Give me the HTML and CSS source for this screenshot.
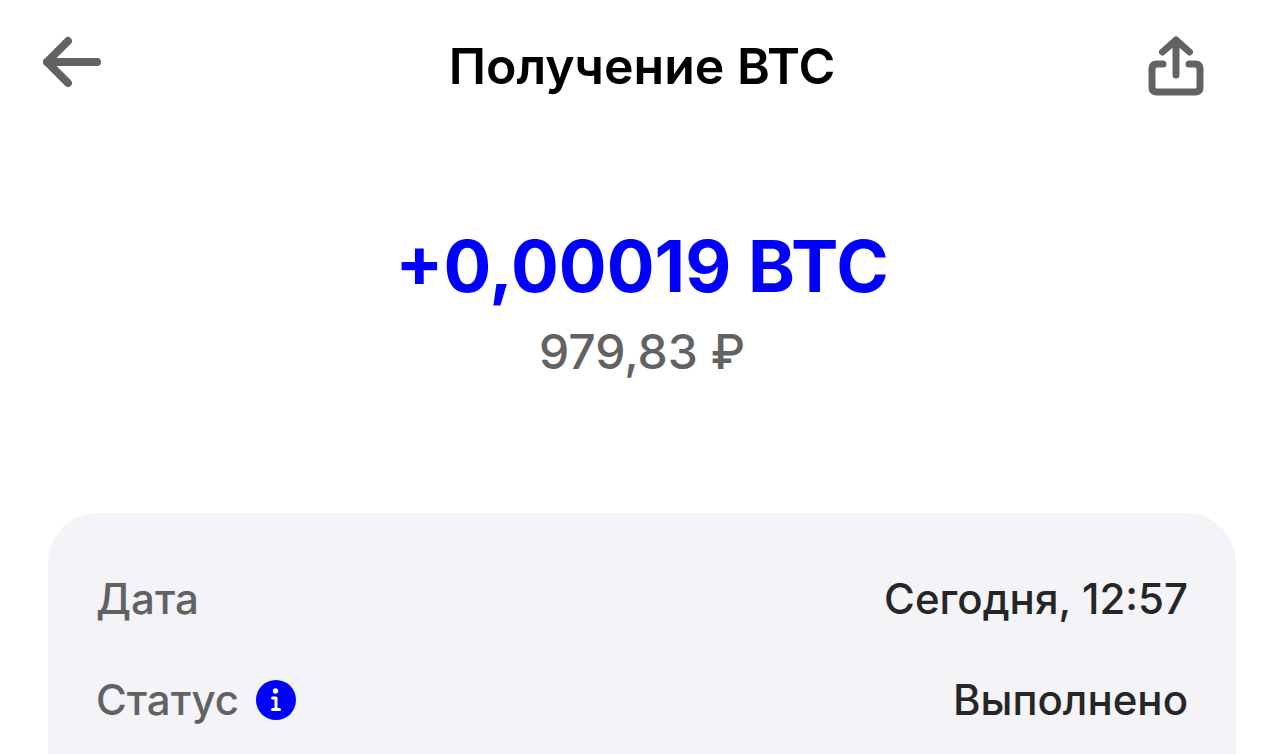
FILE: index.html
```html
<!DOCTYPE html>
<html lang="ru">
<head>
    <meta charset="UTF-8">
    <meta name="viewport" content="width=device-width, initial-scale=1.0">
    <title>Получение BTC</title>
    <link rel="stylesheet" href="styles.css">
</head>
<body>
    <header class="header">
        <button class="back-btn" type="button" aria-label="Назад">
            <svg class="back-icon" width="64" height="64" viewBox="0 0 64 64">
                <path d="M28 11 L7 32 L28 53 M7 32 H57"/>
            </svg>
        </button>
        <h1>Получение BTC</h1>
        <button class="share-btn" type="button" aria-label="Поделиться">
            <svg width="64" height="68" viewBox="0 0 64 68">
                <path d="M32 45 V10 M18.5 22 L32 10 L45.5 22"/>
                <path d="M19 34 H13 Q8 34 8 39 V57 Q8 62 13 62 H51 Q56 62 56 57 V39 Q56 34 51 34 H45"/>
            </svg>
        </button>
    </header>

    <main>
        <section class="amount">
            <p class="crypto">+0,00019 BTC</p>
            <p class="fiat">979,83 ₽</p>
        </section>

        <dl class="details">
            <div class="row">
                <dt>Дата</dt>
                <dd>Сегодня, 12:57</dd>
            </div>
            <div class="row">
                <dt>
                    Статус
                    <button class="info-btn" type="button" aria-label="О статусе">
                        <svg width="40" height="40" viewBox="0 0 40 40">
                            <circle class="info-bg" cx="20" cy="20" r="20"/>
                            <circle class="info-dot" cx="19.5" cy="11" r="2.7"/>
                            <path class="info-stem" d="M16.5 18 H20 V29.5 M16.5 29.5 H23.5"/>
                        </svg>
                    </button>
                </dt>
                <dd>Выполнено</dd>
            </div>
        </dl>
    </main>
</body>
</html>
```
FILE: styles.css
```css
* {
    margin: 0;
    padding: 0;
    box-sizing: border-box;
}

body {
    display: flex;
    flex-direction: column;
    min-height: 100vh;
    background: #fff;
    font-family: 'Inter', sans-serif;
    font-weight: 500;
}

button {
    border: none;
    background: none;
    cursor: pointer;
}

svg {
    display: block;
    fill: none;
    stroke: #626262;
    stroke-width: 7;
    stroke-linecap: round;
    stroke-linejoin: round;
}

.header {
    display: grid;
    grid-template-columns: 1fr auto 1fr;
    align-items: start;
    padding: 30px 40px 0;
}

.back-btn {
    justify-self: start;
}

.back-icon {
    stroke-width: 8;
}

.share-btn {
    justify-self: end;
    margin-right: 36px;
}

h1 {
    color: #000;
    font-size: 50px;
    font-weight: 600;
    line-height: 72px;
}

main {
    flex: 1;
    display: flex;
    flex-direction: column;
}

.amount {
    padding: 120px 0 119px;
    text-align: center;
}

.crypto {
    color: #00f;
    font-size: 71px;
    font-weight: 700;
    line-height: 88px;
}

.fiat {
    color: #626262;
    font-size: 48px;
    line-height: 84px;
}

/* the card runs down to the bottom of the screen */
.details {
    flex: 1;
    margin: 0 48px;
    padding: 35px 48px 0;
    background: #f3f3f8;
    border-radius: 50px 50px 0 0;
    font-size: 42px;
    line-height: 101px;
}

.row {
    display: flex;
    justify-content: space-between;
}

dt {
    display: flex;
    align-items: center;
    gap: 17px;
    color: #626262;
}

dd {
    color: #262626;
}

.info-bg {
    fill: #00f;
    stroke: none;
}

.info-dot {
    fill: #fff;
    stroke: none;
}

.info-stem {
    stroke: #fff;
    stroke-width: 3;
}
```
